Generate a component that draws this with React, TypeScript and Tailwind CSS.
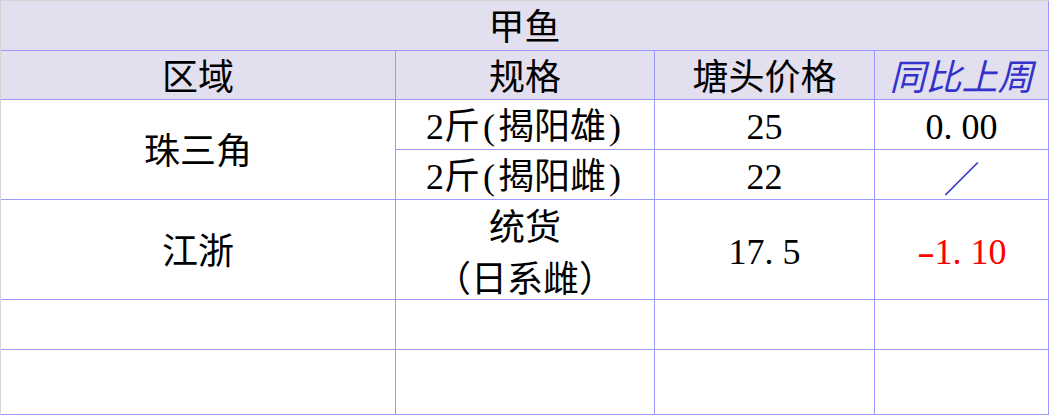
import React from "react";

const font = "font-['Liberation_Serif','Noto_Sans_CJK_SC',serif]";

function Cell({
  children,
  className = "bg-white text-black",
}: {
  children?: React.ReactNode;
  className?: string;
}) {
  return (
    <div
      className={`flex items-center justify-center text-[36px] leading-none pt-[5px] ${className}`}
    >
      {children}
    </div>
  );
}

function Half({ c }: { c: string }) {
  return <span className="inline-block w-[18px] text-center">{c}</span>;
}

function Num({ v }: { v: string }) {
  const neg = v.startsWith("-");
  const body = neg ? v.slice(1) : v;
  const parts = body.split(".");
  return (
    <span>
      {neg && <span className="inline-block w-[18px] text-center scale-x-150">-</span>}
      {parts[0]}
      {parts.length > 1 && <span className="inline-block w-[18px]">.</span>}
      {parts[1]}
    </span>
  );
}

const head = "bg-[#e2dfee] text-black";
const body = "bg-white text-black";

export default function App() {
  return (
    <div className={`w-[1049px] h-[415px] border-t border-l border-[#d4d4d4] bg-white ${font}`}>
      <div className="grid grid-cols-[394px_258px_219px_173px] grid-rows-[49px_48px_49px_49px_99px_49px_64px] gap-px bg-[#9999ff] pr-px pb-px">
        <Cell className={`col-span-4 ${head}`}>甲鱼</Cell>

        <Cell className={head}>区域</Cell>
        <Cell className={head}>规格</Cell>
        <Cell className={head}>塘头价格</Cell>
        <Cell className="bg-[#e2dfee] italic text-[#3333cc]">同比上周</Cell>

        <Cell className={`row-span-2 ${body}`}>珠三角</Cell>
        <Cell className={body}>
          2斤<Half c="(" />揭阳雄<Half c=")" />
        </Cell>
        <Cell className={body}>25</Cell>
        <Cell className={body}>
          <Num v="0.00" />
        </Cell>

        <Cell className={body}>
          2斤<Half c="(" />揭阳雌<Half c=")" />
        </Cell>
        <Cell className={body}>22</Cell>
        <Cell className="bg-white text-[#3333cc] font-['Noto_Sans_CJK_SC',sans-serif]">／</Cell>

        <Cell className={body}>江浙</Cell>
        <Cell className={`flex-col gap-[12px] ${body}`}>
          <span>统货</span>
          <span className="font-['Noto_Sans_CJK_SC',sans-serif]">（日系雌）</span>
        </Cell>
        <Cell className={body}>
          <Num v="17.5" />
        </Cell>
        <Cell className="bg-white text-[#ff0000]">
          <Num v="-1.10" />
        </Cell>

        <Cell className={body} />
        <Cell className={body} />
        <Cell className={body} />
        <Cell className={body} />

        <Cell className={body} />
        <Cell className={body} />
        <Cell className={body} />
        <Cell className={body} />
      </div>
    </div>
  );
}
